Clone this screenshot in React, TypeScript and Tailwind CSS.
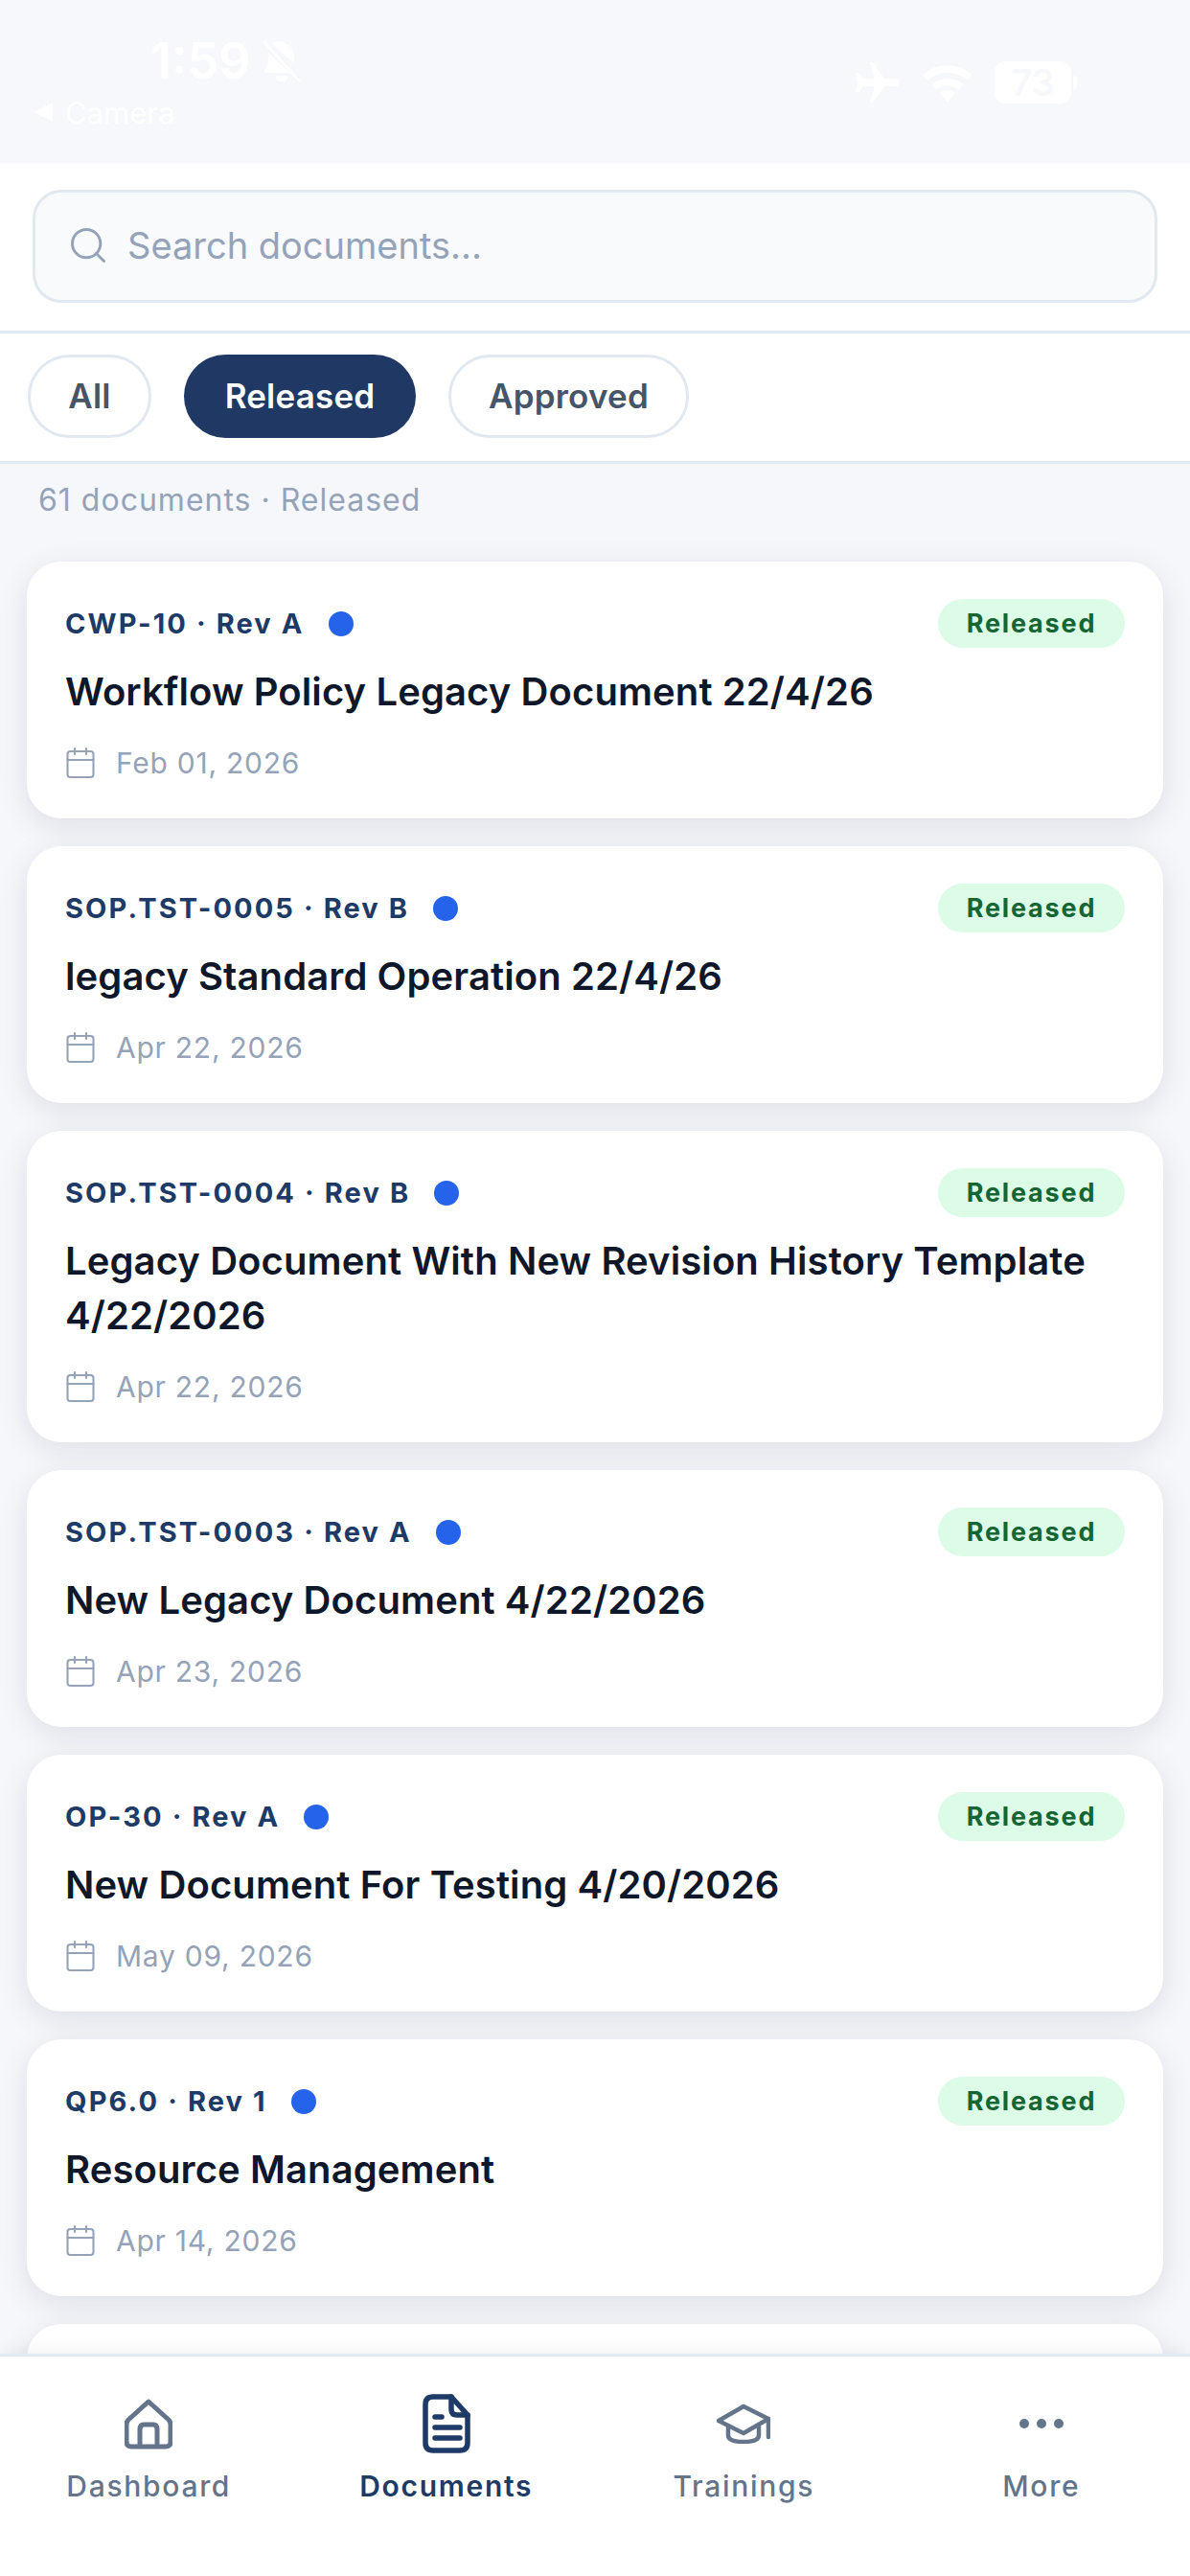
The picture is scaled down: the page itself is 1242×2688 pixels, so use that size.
import { Search, Calendar } from 'lucide-react';

interface Doc {
  code: string;
  title: string;
  date: string;
}

const DOCS: Doc[] = [
  { code: 'CWP-10 · Rev A', title: 'Workflow Policy Legacy Document 22/4/26', date: 'Feb 01, 2026' },
  { code: 'SOP.TST-0005 · Rev B', title: 'legacy Standard Operation 22/4/26', date: 'Apr 22, 2026' },
  { code: 'SOP.TST-0004 · Rev B', title: 'Legacy Document With New Revision History Template 4/22/2026', date: 'Apr 22, 2026' },
  { code: 'SOP.TST-0003 · Rev A', title: 'New Legacy Document 4/22/2026', date: 'Apr 23, 2026' },
  { code: 'OP-30 · Rev A', title: 'New Document For Testing 4/20/2026', date: 'May 09, 2026' },
  { code: 'QP6.0 · Rev 1', title: 'Resource Management', date: 'Apr 14, 2026' },
];

function StatusBar() {
  return (
    <div className="h-[170px] shrink-0 bg-[#f6f8fc] flex justify-between text-white">
      <div className="pl-[35px] pt-[41px]">
        <div className="flex items-center pl-[122px] h-[46px]">
          <span className="text-[52px] font-semibold leading-none">1:59</span>
          <svg viewBox="0 0 40 44" className="w-[40px] h-[44px] ml-[12px]" fill="currentColor">
            <path d="M20 1c2 0 3 1 3 3 6 1 10 6 10 13v7L10 4c2-2 6-3 10-3zM6 13l23 21H4c-2 0-3-2-2-3 3-3 4-6 4-11v-7zM14 37h12c0 4-2 6-6 6s-6-2-6-6z" />
            <path d="M2 2l36 40" stroke="currentColor" strokeWidth="2.5" strokeLinecap="round" />
          </svg>
        </div>
        <div className="flex items-center mt-[13px] h-[34px] text-[31px] leading-none">
          <span className="w-0 h-0 border-y-[10px] border-y-transparent border-r-[20px] border-r-white mr-[13px]" />
          <span>Camera</span>
        </div>
      </div>
      <div className="flex items-center h-[44px] mt-[64px] mr-[118px]">
        <svg viewBox="0 0 48 42" className="w-[48px] h-[42px]" fill="currentColor">
          <path d="M16 0h3l12 17h11c3 0 5 2 5 4s-2 4-5 4H31L19 42h-3l5-17H9l-4 6H1l2-10-2-10h4l4 6h12z" />
        </svg>
        <svg viewBox="0 0 56 40" className="w-[56px] h-[40px] ml-[21px]" fill="none" stroke="currentColor" strokeWidth="7.5">
          <path d="M5 15c13-12 33-12 46 0" />
          <path d="M14 25c8-7 20-7 28 0" />
          <path d="M28 40l-8-9c4-4 12-4 16 0z" fill="currentColor" stroke="none" />
        </svg>
        <div className="ml-[21px] w-[80px] h-[44px] rounded-[11px] bg-white flex items-center justify-center text-[#f6f8fc] text-[38px] font-semibold leading-none">
          73
        </div>
        <span className="ml-[2px] w-[4px] h-[14px] rounded-r-full bg-white/80" />
      </div>
    </div>
  );
}

const cardClass = 'shrink-0 bg-white rounded-[36px] shadow-[0_8px_32px_rgba(15,23,42,0.1)]';

function DocCard({ doc }: { doc: Doc }) {
  return (
    <div className={`${cardClass} px-[40px] pt-[39px] pb-[43px]`}>
      <div className="flex items-center justify-between h-[51px]">
        <div className="flex items-center gap-[25px]">
          <span className="text-[29px] font-bold tracking-[2.1px] text-[#1e3a66] leading-none">{doc.code}</span>
          <span className="w-[26px] h-[26px] rounded-full bg-[#2563eb]" />
        </div>
        <span className="h-[51px] w-[195px] pt-[2px] rounded-full bg-[#dcfce7] text-[#166534] text-[27px] font-bold tracking-[1.8px] flex items-center justify-center">
          Released
        </span>
      </div>
      <div className="mt-[17px] text-[40px] leading-[57px] tracking-[0.1px] font-semibold text-[#0f172a]">{doc.title}</div>
      <div className="flex items-center mt-[31px] h-[30px] text-[#94a3b8]">
        <Calendar className="w-[36px] h-[36px] -ml-[2px]" strokeWidth={1.4} />
        <span className="ml-[19px] text-[30px] tracking-[0.75px] leading-none">{doc.date}</span>
      </div>
    </div>
  );
}

function HomeIcon() {
  return (
    <svg viewBox="0 0 50 53" className="w-[50px] h-[53px]" fill="none" stroke="#64748b" strokeWidth="5" strokeLinejoin="round">
      <path d="M25 3 46 22q2 2 2 5v18q0 5-5 5H7q-5 0-5-5V27q0-3 2-5z" />
      <path d="M16 50V32q0-5 4-5h10q4 0 4 5v18" />
    </svg>
  );
}

function DocIcon() {
  return (
    <svg viewBox="0 0 50 62" className="w-[50px] h-[62px]" fill="none" stroke="#1e3a66" strokeWidth="5.5" strokeLinecap="round" strokeLinejoin="round">
      <path d="M11 3h19l17 19v29q0 8-8 8H11q-8 0-8-8V11q0-8 8-8z" />
      <path d="M30 3v13q0 6 6 6h11" />
      <path d="M13 24h7M13 35h26M13 46h26" />
    </svg>
  );
}

function CapIcon() {
  return (
    <svg viewBox="0 0 56 41" className="w-[56px] h-[41px]" fill="none" stroke="#64748b" strokeWidth="4.5" strokeLinecap="round" strokeLinejoin="round">
      <path d="M28 2 54 15 28 30 2 17z" />
      <path d="M12 23v9q0 7 16 7t16-7v-9" />
      <path d="M54 15v19" />
    </svg>
  );
}

function DotsIcon() {
  return (
    <svg viewBox="0 0 46 10" className="w-[46px] h-[10px]" fill="#64748b">
      <circle cx="5" cy="5" r="5" />
      <circle cx="23" cy="5" r="5" />
      <circle cx="41" cy="5" r="5" />
    </svg>
  );
}

function NavItem({ label, active, children }: { label: string; active?: boolean; children: React.ReactNode }) {
  return (
    <div className="flex-1 flex flex-col items-center">
      <div className="h-[62px] flex items-center justify-center">{children}</div>
      <span className={`mt-[16px] text-[30px] leading-[36px] tracking-[1.7px] ${active ? 'font-semibold text-[#1e3a66]' : 'font-medium text-[#64748b]'}`}>
        {label}
      </span>
    </div>
  );
}

export default function App() {
  return (
    <div className="w-[1242px] h-[2688px] overflow-hidden flex flex-col bg-[#f5f7fb] font-['Inter',sans-serif]">
      <StatusBar />

      <div className="shrink-0 bg-white h-[178px] pt-[28px] px-[34px] border-b-[3px] border-[#e2e8f0]">
        <div className="h-[118px] rounded-[30px] border-[3px] border-[#e2e8f0] bg-[#f8fafc] flex items-center pl-[33px] pb-[2px]">
          <Search className="w-[44px] h-[44px] text-[#94a3b8]" strokeWidth={1.6} />
          <span className="ml-[19px] text-[38px] text-[#94a3b8]">Search documents...</span>
        </div>
      </div>

      <div className="shrink-0 bg-white h-[136px] px-[29px] pb-[2px] border-b-[3px] border-[#e2e8f0] flex items-center gap-[34px]">
        <span className="h-[87px] w-[129px] rounded-full border-[3px] border-[#e2e8f0] flex items-center justify-center text-[35px] tracking-[0.2px] font-semibold text-[#475569]">All</span>
        <span className="h-[87px] w-[242px] rounded-full bg-[#1f3864] flex items-center justify-center text-[35px] tracking-[0.2px] font-semibold text-white">Released</span>
        <span className="h-[87px] w-[251px] rounded-full border-[3px] border-[#e2e8f0] flex items-center justify-center text-[35px] tracking-[0.2px] font-semibold text-[#475569]">Approved</span>
      </div>

      <div className="flex-1 min-h-0 overflow-hidden">
        <div className="px-[40px] pt-[19px] h-[102px] text-[32px] tracking-[1px] leading-[38px] text-[#94a3b8]">61 documents · Released</div>
        <div className="px-[28px] flex flex-col gap-[29px]">
          {DOCS.map((doc) => (
            <DocCard key={doc.code} doc={doc} />
          ))}
          {/* next row, only its top edge shows above the tab bar */}
          <div className={`${cardClass} h-[267px]`} />
        </div>
      </div>

      <div className="relative shrink-0 h-[232px] bg-white border-t-[3px] border-[#e2e8f0] pt-[39px] flex shadow-[0_-4px_16px_rgba(15,23,42,0.05)]">
        <NavItem label="Dashboard"><HomeIcon /></NavItem>
        <NavItem label="Documents" active><DocIcon /></NavItem>
        <NavItem label="Trainings"><CapIcon /></NavItem>
        <NavItem label="More"><DotsIcon /></NavItem>
      </div>
    </div>
  );
}
